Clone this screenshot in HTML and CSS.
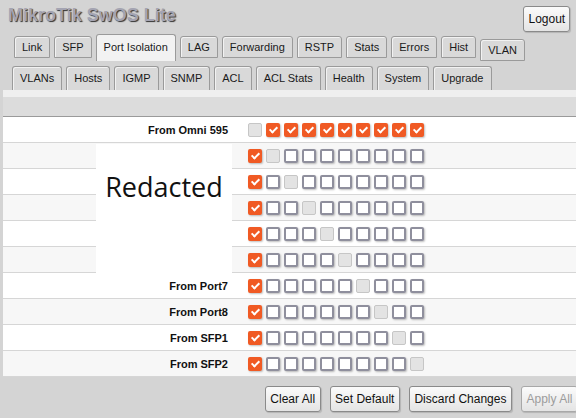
FILE: index.html
```html
<!DOCTYPE html>
<html>
<head>
<meta charset="utf-8">
<title>MikroTik SwOS Lite</title>
<link rel="stylesheet" href="styles.css">
</head>
<body>
<div class="top">
  <h1 class="title">MikroTik SwOS Lite</h1>
  <button class="btn logout">Logout</button>
</div>
<div class="tabs r1">
  <span class="tab">Link</span>
  <span class="tab">SFP</span>
  <span class="tab sel">Port Isolation</span>
  <span class="tab">LAG</span>
  <span class="tab">Forwarding</span>
  <span class="tab">RSTP</span>
  <span class="tab">Stats</span>
  <span class="tab">Errors</span>
  <span class="tab">Hist</span>
  <span class="tab low">VLAN</span>
</div>
<div class="tabs r2">
  <span class="tab">VLANs</span>
  <span class="tab">Hosts</span>
  <span class="tab">IGMP</span>
  <span class="tab">SNMP</span>
  <span class="tab">ACL</span>
  <span class="tab">ACL Stats</span>
  <span class="tab">Health</span>
  <span class="tab">System</span>
  <span class="tab">Upgrade</span>
</div>
<div class="panel">
  <div class="thead"></div>
  <div class="rows">
    <div class="row"><div class="lbl">From Omni 595</div><div class="cbs"><span class="cb dis"></span><span class="cb on"></span><span class="cb on"></span><span class="cb on"></span><span class="cb on"></span><span class="cb on"></span><span class="cb on"></span><span class="cb on"></span><span class="cb on"></span><span class="cb on"></span></div></div>
    <div class="row"><div class="lbl"></div><div class="cbs"><span class="cb on"></span><span class="cb dis"></span><span class="cb"></span><span class="cb"></span><span class="cb"></span><span class="cb"></span><span class="cb"></span><span class="cb"></span><span class="cb"></span><span class="cb"></span></div></div>
    <div class="row"><div class="lbl"></div><div class="cbs"><span class="cb on"></span><span class="cb"></span><span class="cb dis"></span><span class="cb"></span><span class="cb"></span><span class="cb"></span><span class="cb"></span><span class="cb"></span><span class="cb"></span><span class="cb"></span></div></div>
    <div class="row"><div class="lbl"></div><div class="cbs"><span class="cb on"></span><span class="cb"></span><span class="cb"></span><span class="cb dis"></span><span class="cb"></span><span class="cb"></span><span class="cb"></span><span class="cb"></span><span class="cb"></span><span class="cb"></span></div></div>
    <div class="row"><div class="lbl"></div><div class="cbs"><span class="cb on"></span><span class="cb"></span><span class="cb"></span><span class="cb"></span><span class="cb dis"></span><span class="cb"></span><span class="cb"></span><span class="cb"></span><span class="cb"></span><span class="cb"></span></div></div>
    <div class="row"><div class="lbl"></div><div class="cbs"><span class="cb on"></span><span class="cb"></span><span class="cb"></span><span class="cb"></span><span class="cb"></span><span class="cb dis"></span><span class="cb"></span><span class="cb"></span><span class="cb"></span><span class="cb"></span></div></div>
    <div class="row"><div class="lbl">From Port7</div><div class="cbs"><span class="cb on"></span><span class="cb"></span><span class="cb"></span><span class="cb"></span><span class="cb"></span><span class="cb"></span><span class="cb dis"></span><span class="cb"></span><span class="cb"></span><span class="cb"></span></div></div>
    <div class="row"><div class="lbl">From Port8</div><div class="cbs"><span class="cb on"></span><span class="cb"></span><span class="cb"></span><span class="cb"></span><span class="cb"></span><span class="cb"></span><span class="cb"></span><span class="cb dis"></span><span class="cb"></span><span class="cb"></span></div></div>
    <div class="row"><div class="lbl">From SFP1</div><div class="cbs"><span class="cb on"></span><span class="cb"></span><span class="cb"></span><span class="cb"></span><span class="cb"></span><span class="cb"></span><span class="cb"></span><span class="cb"></span><span class="cb dis"></span><span class="cb"></span></div></div>
    <div class="row"><div class="lbl">From SFP2</div><div class="cbs"><span class="cb on"></span><span class="cb"></span><span class="cb"></span><span class="cb"></span><span class="cb"></span><span class="cb"></span><span class="cb"></span><span class="cb"></span><span class="cb"></span><span class="cb dis"></span></div></div>
    <div class="redact">Redacted</div>
  </div>
</div>
<div class="actions">
  <button class="btn">Clear All</button>
  <button class="btn">Set Default</button>
  <button class="btn">Discard Changes</button>
  <button class="btn off">Apply All</button>
</div>
</body>
</html>
```
FILE: styles.css
```css
html, body {
  margin: 0;
  padding: 0;
}
body {
  background: #d4d4d4;
  font-family: "Liberation Sans", Arial, sans-serif;
  font-size: 11px;
  color: #1a1a1a;
  width: 576px;
  height: 418px;
  overflow: hidden;
}
.top {
  display: flex;
  justify-content: space-between;
  align-items: flex-start;
  height: 34px;
  padding: 0 6px 0 8px;
}
.title {
  margin: 5px 0 0;
  font-size: 18px;
  line-height: 20px;
  font-weight: bold;
  color: #a4a4b2;
  text-shadow: 1px 1px 1px #333;
}
.btn {
  height: 26px;
  padding: 0 4.5px;
  font-family: "Liberation Sans", Arial, sans-serif;
  font-size: 12px;
  color: #111;
  border: 1px solid #8a8a8a;
  border-radius: 3px;
  background: linear-gradient(#fbfbfb, #e4e4e4);
  box-shadow: 1px 1px 1px rgba(0,0,0,0.15);
  white-space: nowrap;
}
.logout {
  margin-top: 6px;
  width: 47px;
}
.btn.off {
  color: #9c9c9c;
  border-color: #a8a8a8;
}
.tabs {
  display: flex;
  gap: 4px;
  align-items: flex-start;
}
.tabs.r1 {
  padding-left: 14px;
  height: 31px;
}
.tabs.r2 {
  padding-left: 12px;
  height: 25px;
}
.tab {
  margin-top: 2px;
  height: 20px;
  line-height: 20px;
  padding: 0 7px;
  border: 1px solid #9a9a9a;
  border-radius: 3px 3px 0 0;
  background: #d9d9d9;
  box-shadow: inset 1px 1px 0 #f2f2f2;
  color: #1a1a1a;
  white-space: nowrap;
}
.tab.sel {
  margin-top: 0;
  height: 26px;
  line-height: 24px;
  background: #f2f2f2;
  border-bottom: none;
}
.tab.low {
  margin-top: 5px;
}
.r2 .tab {
  margin-top: 1px;
  height: 23px;
  line-height: 22px;
  padding: 0 7px;
  border-bottom: none;
}
.panel {
  margin-left: 3px;
  background: #efefef;
  padding-top: 7px;
}
.thead {
  height: 19px;
  background: #dcdcdc;
  border-bottom: 1px solid #9a9a9a;
}
.rows {
  position: relative;
  background: #fff;
}
.row {
  display: flex;
  align-items: center;
  height: 25px;
  border-bottom: 1px solid #d6d6d6;
}
.row:nth-child(even) {
  background: #f7f7f7;
}
.lbl {
  width: 225px;
  padding-right: 4px;
  text-align: right;
  font-weight: bold;
  color: #111;
}
.cbs {
  display: flex;
  gap: 4px;
  padding-left: 16px;
}
.cb {
  position: relative;
  width: 14px;
  height: 14px;
  box-sizing: border-box;
  border: 2px solid #8f8f9d;
  border-radius: 2px;
  background: #fff;
  box-shadow: 1px 1px 2px rgba(0,0,0,0.25);
}
.cb.on {
  background: #f05a24;
  border-color: #f05a24;
}
.cb.on::after {
  content: "";
  position: absolute;
  left: 3px;
  top: 0;
  width: 3px;
  height: 6px;
  border: solid #fff;
  border-width: 0 2px 2px 0;
  transform: rotate(45deg);
}
.cb.dis {
  background: #e3e3e3;
  border: 1px solid #c6c6c6;
  box-shadow: none;
}
.redact {
  position: absolute;
  left: 93px;
  top: 27px;
  width: 136px;
  height: 129px;
  box-sizing: border-box;
  padding-top: 27px;
  background: #fff;
  text-align: center;
  font-family: "Open Sans", sans-serif;
  font-size: 27px;
  line-height: 32px;
  color: #111;
}
.actions {
  display: flex;
  justify-content: flex-end;
  gap: 9px;
  padding-top: 9px;
  margin-right: -2px;
}
```
